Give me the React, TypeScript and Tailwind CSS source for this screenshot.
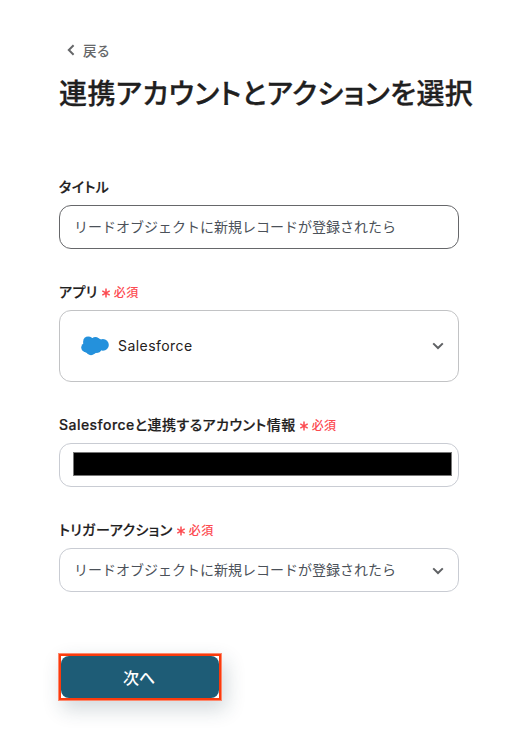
import React from 'react';

const ACTION_NAME = 'リードオブジェクトに新規レコードが登録されたら';

const ChevronDown: React.FC<{ className?: string }> = ({ className = '' }) => (
  <svg className={`w-3 h-2 flex-shrink-0 ${className}`} viewBox="0 0 12 8" fill="none" stroke="#5f6164" strokeWidth="2">
    <path d="M1.2 1.4 6 6l4.8-4.6" />
  </svg>
);

const SalesforceIcon: React.FC = () => (
  <svg className="w-7 h-5 flex-shrink-0" viewBox="0 0 28 20" fill="#2491dc">
    <circle cx="7.2" cy="5.4" r="5" />
    <circle cx="14.4" cy="5.4" r="4.5" />
    <circle cx="4.8" cy="11.6" r="4.6" />
    <circle cx="21.9" cy="8.9" r="5.9" />
    <circle cx="10" cy="14.3" r="4.9" />
    <circle cx="16.2" cy="12.8" r="4" />
    <path d="M2.3 6 9.5 1.5 11 1.9 17 2.2 20 3.5V14.6L16.5 16.6 13.5 17.4 7 17.6 3 15.6z" />
  </svg>
);

const Field: React.FC<{
  label: string;
  required?: boolean;
  children: React.ReactNode;
}> = ({ label, required = false, children }) => (
  <div className="flex flex-col gap-2">
    <div className="flex items-center h-5 whitespace-nowrap leading-5">
      <span className="text-sm font-medium tracking-[0.46px] text-[#1f2020] [-webkit-text-stroke:0.2px_#1f2020]">{label}</span>
      {required && (
        <span className="mt-px ml-1 flex items-center gap-1 text-[#fc4a50]">
          <svg className="w-2 h-2.5 mt-px" viewBox="0 0 8 10" stroke="currentColor" strokeWidth="1.5">
            <path d="M4 .5v9M.3 2.8l7.4 4.4M7.7 2.8.3 7.2" />
          </svg>
          <span className="text-xs font-medium tracking-[0.48px]">必須</span>
        </span>
      )}
    </div>
    {children}
  </div>
);

export default function App() {
  return (
    <main className="w-[526px] h-[738px] overflow-hidden bg-white pl-[59px] pt-[41px] font-['Inter','Noto_Sans_CJK_JP',sans-serif] [font-feature-settings:'palt']">
      <button className="flex items-center h-5 pl-2 text-[#666769]">
        <svg className="w-2 h-3 -mt-0.5" viewBox="0 0 8 12" fill="none" stroke="currentColor" strokeWidth="2">
          <path d="M6.6 1.2 1.8 6l4.8 4.8" />
        </svg>
        <span className="ml-2 text-[13.5px] font-medium tracking-[0.54px]">戻る</span>
      </button>

      <h1 className="mt-3 h-[42px] whitespace-nowrap text-[28px] leading-[42px] font-medium tracking-[0.42px] text-[#1f2020] [-webkit-text-stroke:0.3px_#1f2020]">
        連携アカウントとアクションを選択
      </h1>

      <form className="mt-[62px] w-[400px] flex flex-col gap-[33px]">
        <Field label="タイトル">
          <div className="flex items-center h-11 rounded-xl border border-[#66676a] px-3.5 text-sm text-[#4b5159] [font-feature-settings:normal]">
            {ACTION_NAME}
          </div>
        </Field>

        <Field label="アプリ" required>
          <div className="flex items-center h-[72px] rounded-xl border border-[#c2c3c5] pl-[21px] pr-3.5">
            <SalesforceIcon />
            <span className="ml-[9px] flex-1 text-sm tracking-[0.45px] text-[#1f2020]">Salesforce</span>
            <ChevronDown />
          </div>
        </Field>

        <Field label="Salesforceと連携するアカウント情報" required>
          <div className="h-11 rounded-xl border border-[#c9ccd3] pt-2 pl-[13px] pr-1.5">
            <div className="h-6 border border-[#777] bg-black" />
          </div>
        </Field>

        <Field label="トリガーアクション" required>
          <div className="flex items-center h-11 rounded-xl border border-[#c9ccd3] pl-3.5 pr-3.5">
            <span className="flex-1 text-sm text-[#4b5159] [font-feature-settings:normal]">{ACTION_NAME}</span>
            <ChevronDown className="mt-0.5" />
          </div>
        </Field>
      </form>

      <div className="mt-[61px] -ml-px w-[164px] h-12 border border-[#fb3b0d]/60 shadow-[4px_8px_20px_rgba(30,60,75,0.2)]">
        <div className="w-full h-full border-2 border-[#fb3b0d] bg-white">
          <button className="w-full h-full rounded-lg bg-[#1e5c76] pr-0.5 pt-px text-base font-medium text-white">
            次へ
          </button>
        </div>
      </div>
    </main>
  );
}
